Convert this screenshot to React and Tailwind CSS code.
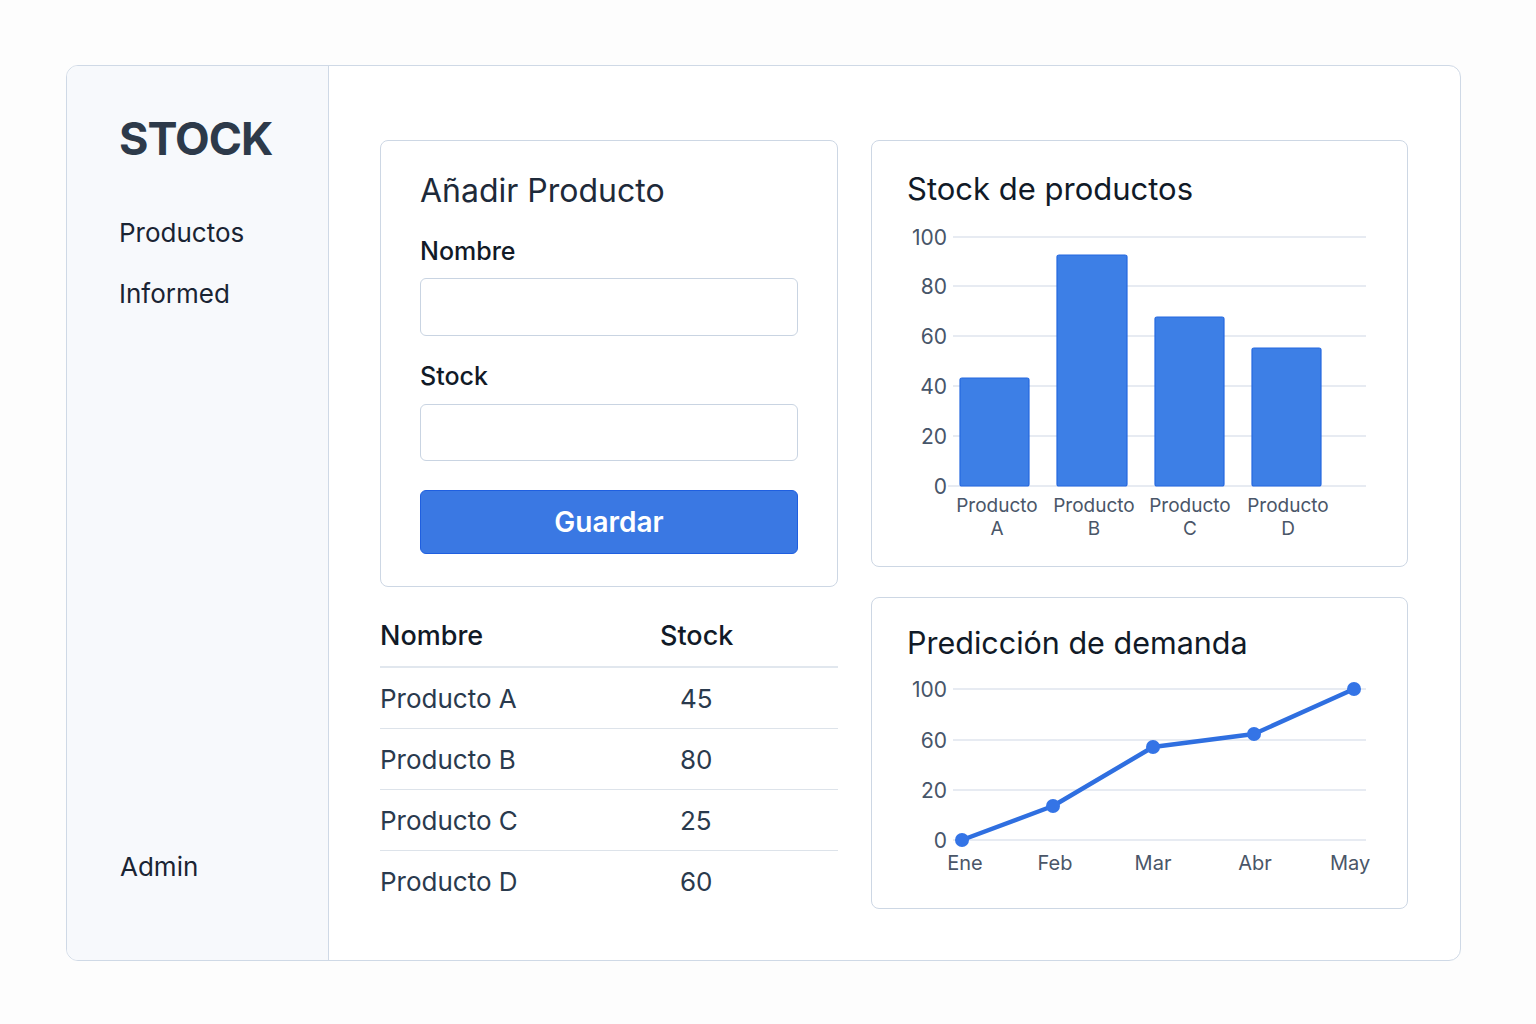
const rows = [
  { name: "Producto A", stock: 45 },
  { name: "Producto B", stock: 80 },
  { name: "Producto C", stock: 25 },
  { name: "Producto D", stock: 60 },
];

const bars = [
  { label: "A", x: 88, w: 69, top: 156, cx: 125 },
  { label: "B", x: 185, w: 70, top: 33, cx: 222 },
  { label: "C", x: 283, w: 69, top: 95, cx: 318 },
  { label: "D", x: 380, w: 69, top: 126, cx: 416 },
];

const barTicks = [
  { v: "100", y: 15 },
  { v: "80", y: 64 },
  { v: "60", y: 114 },
  { v: "40", y: 164 },
  { v: "20", y: 214 },
  { v: "0", y: 264 },
];

const lineTicks = [
  { v: "100", y: 19 },
  { v: "60", y: 70 },
  { v: "20", y: 120 },
  { v: "0", y: 170 },
];

const points = [
  { x: 90, y: 170 },
  { x: 181, y: 136 },
  { x: 281, y: 77 },
  { x: 382, y: 64 },
  { x: 482, y: 19 },
];

const months = [
  { m: "Ene", x: 93 },
  { m: "Feb", x: 183 },
  { m: "Mar", x: 281 },
  { m: "Abr", x: 383 },
  { m: "May", x: 478 },
];

function BarChart() {
  return (
    <svg className="block" width="535" height="318" viewBox="0 0 535 318">
      {barTicks.map((t) => (
        <g key={t.v}>
          <line x1={t.v === "0" ? 76 : 81} x2="494" y1={t.y} y2={t.y} stroke="#dfe5ee" strokeWidth="1.5" />
          <text x="75" y={t.y} textAnchor="end" dominantBaseline="central" fontSize="21" fill="#475569">
            {t.v}
          </text>
        </g>
      ))}
      {bars.map((b) => (
        <g key={b.label}>
          <rect x={b.x} y={b.top} width={b.w} height={264 - b.top} rx="2" fill="#3d7fe6" stroke="#2468e0" strokeWidth="1.2" />
          <text x={b.cx} y="283" textAnchor="middle" dominantBaseline="central" fontSize="19" fill="#4a5668">
            Producto
          </text>
          <text x={b.cx} y="306" textAnchor="middle" dominantBaseline="central" fontSize="19" fill="#4a5668">
            {b.label}
          </text>
        </g>
      ))}
    </svg>
  );
}

function LineChart() {
  const d = points.map((p, i) => `${i ? "L" : "M"}${p.x} ${p.y}`).join(" ");
  return (
    <svg className="block" width="535" height="210" viewBox="0 0 535 210">
      {lineTicks.map((t) => (
        <g key={t.v}>
          <line x1="81" x2="494" y1={t.y} y2={t.y} stroke="#dfe5ee" strokeWidth="1.5" />
          <text x="75" y={t.y} textAnchor="end" dominantBaseline="central" fontSize="21" fill="#475569">
            {t.v}
          </text>
        </g>
      ))}
      <path d={d} fill="none" stroke="#2f6fe0" strokeWidth="4.5" strokeLinejoin="round" strokeLinecap="round" />
      {points.map((p, i) => (
        <circle key={i} cx={p.x} cy={p.y} r="7" fill="#3474e6" />
      ))}
      {months.map((m) => (
        <text key={m.m} x={m.x} y="193" textAnchor="middle" dominantBaseline="central" fontSize="20" fill="#4a5668">
          {m.m}
        </text>
      ))}
    </svg>
  );
}

export default function App() {
  return (
    <div className="min-h-screen bg-[#fdfdfd] pl-[66px] pt-[65px]" style={{ fontFamily: "Inter, 'Noto Sans', sans-serif" }}>
      <div className="flex h-[896px] w-[1395px] overflow-hidden rounded-[12px] border border-[#cfd9e6] bg-white">
        {/* sidebar */}
        <aside className="flex w-[262px] shrink-0 flex-col justify-between border-r border-[#cfd9e6] bg-[#f7f9fc] pb-[77px] pl-[52px] pt-[50px]">
          <div>
            <div className="text-[45px] font-bold leading-[46px] tracking-[-1px] text-[#2d3a4a]">STOCK</div>
            <nav className="mt-[55px] flex flex-col gap-[29px] text-[26px] leading-[32px] text-[#1a2433]">
              <span>Productos</span>
              <span>Informed</span>
            </nav>
          </div>
          <div className="pl-[1px] text-[26px] leading-[32px] text-[#1a2433]">Admin</div>
        </aside>

        {/* main */}
        <main className="flex gap-[33px] pl-[51px] pt-[74px]">
          <div className="w-[458px]">
            <section className="rounded-[8px] border border-[#cdd7e4] px-[39px] pb-[32px] pt-[30px]">
              <h2 className="text-[32px] leading-[40px] text-[#1e2a3a]">Añadir Producto</h2>
              <label className="mt-[25px] block text-[25px] font-medium leading-[30px] text-[#111a27]">Nombre</label>
              <input className="mt-[12px] block h-[58px] w-full rounded-[6px] border border-[#c9d4e2] bg-white" />
              <label className="mt-[25px] block text-[25px] font-medium leading-[30px] text-[#111a27]">Stock</label>
              <input className="mt-[13px] block h-[57px] w-full rounded-[6px] border border-[#c9d4e2] bg-white" />
              <button className="mt-[29px] block h-[64px] w-full rounded-[6px] border border-[#1f5fe0] bg-[#3a78e3] text-[28px] font-semibold text-white">
                Guardar
              </button>
            </section>

            <div className="mt-[20px]">
              <div className="grid h-[61px] grid-cols-[280px_1fr] items-center border-b-2 border-[#e1e7ee] text-[27px] font-medium text-[#111a27]">
                <span>Nombre</span>
                <span>Stock</span>
              </div>
              {rows.map((r, i) => (
                <div
                  key={r.name}
                  className={`grid h-[61px] grid-cols-[280px_1fr] items-center text-[26px] text-[#2a3a4d] ${i < rows.length - 1 ? "border-b border-[#dde3ea]" : ""}`}
                >
                  <span>{r.name}</span>
                  <span className="pl-[20px]">{r.stock}</span>
                </div>
              ))}
            </div>
          </div>

          <div className="flex w-[537px] flex-col gap-[30px]">
            <section className="h-[427px] rounded-[8px] border border-[#cdd7e4]">
              <h2 className="h-[81px] px-[35px] pt-[30px] text-[31px] leading-[36px] text-[#111a27]">Stock de productos</h2>
              <BarChart />
            </section>
            <section className="h-[312px] rounded-[8px] border border-[#cdd7e4]">
              <h2 className="h-[72px] px-[35px] pt-[27px] text-[30.5px] leading-[36px] text-[#111a27]">Predicción de demanda</h2>
              <LineChart />
            </section>
          </div>
        </main>
      </div>
    </div>
  );
}
